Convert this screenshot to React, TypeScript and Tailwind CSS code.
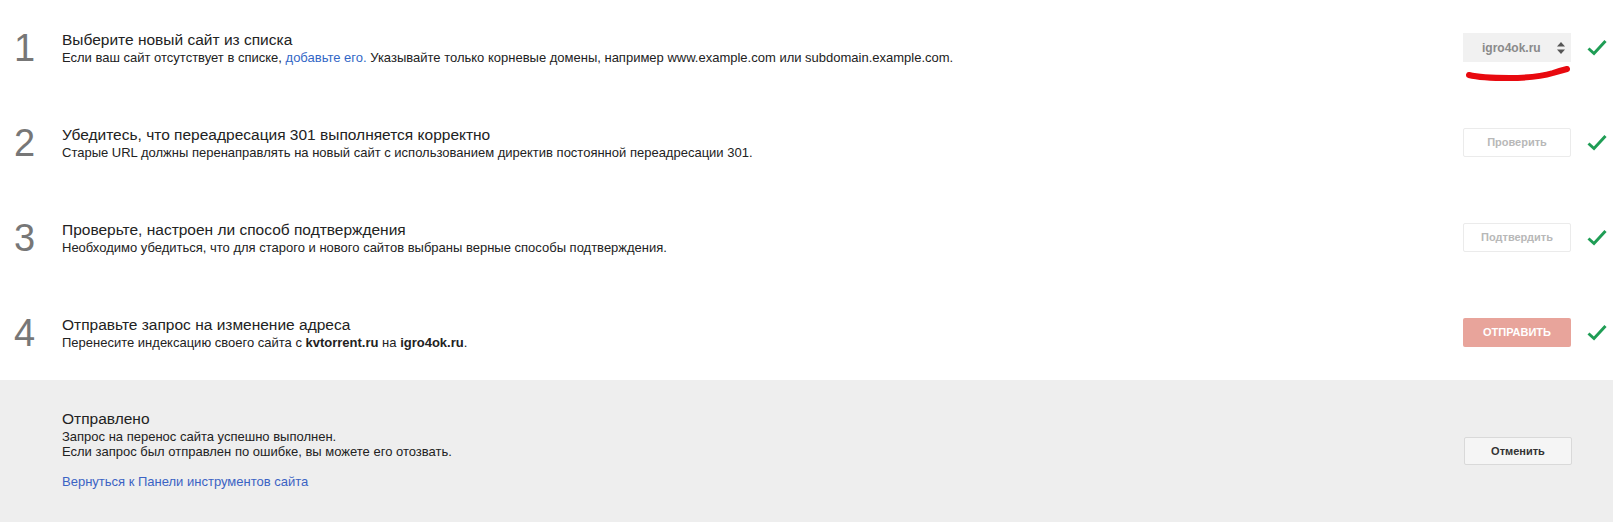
import React from "react";

type Step = {
  num: string;
  title: string;
  desc: React.ReactNode;
  action: React.ReactNode;
};

function Check() {
  return (
    <svg width="20" height="17" viewBox="0 0 20 17" className="shrink-0">
      <path d="M1.5 9.5 L7 14.5 L18.5 2" fill="none" stroke="#1f9d55" strokeWidth="3" />
    </svg>
  );
}

function SiteSelect() {
  return (
    <div className="relative">
      <div className="w-[108px] h-[29px] bg-[#f1f1f1] flex items-center pl-[19px] pr-[6px] text-[12px] font-bold text-[#8a8a8a]">
        <span className="flex-1">igro4ok.ru</span>
        <svg width="8" height="12" viewBox="0 0 8 12">
          <path d="M4 0 L8 4.5 L0 4.5 Z" fill="#555" />
          <path d="M4 12 L8 7.5 L0 7.5 Z" fill="#555" />
        </svg>
      </div>
      {/* red marker underline */}
      <svg
        width="110"
        height="20"
        viewBox="0 0 110 20"
        className="absolute left-0 top-[31px] pointer-events-none"
      >
        <path
          d="M6 11 C 14 13, 30 14, 46 14 C 62 14, 80 12, 90 9 C 96 7, 100 6, 104 5"
          fill="none"
          stroke="#e8090f"
          strokeWidth="6"
          strokeLinecap="round"
        />
      </svg>
    </div>
  );
}

function GhostButton({ label }: { label: string }) {
  return (
    <button className="w-[108px] h-[29px] bg-white border border-[#ebebeb] rounded-[2px] text-[11px] font-bold text-[#b8b8b8]">
      {label}
    </button>
  );
}

const steps: Step[] = [
  {
    num: "1",
    title: "Выберите новый сайт из списка",
    desc: (
      <>
        Если ваш сайт отсутствует в списке,{" "}
        <a className="text-[#3367c6]">добавьте его.</a> Указывайте только корневые домены, например
        www.example.com или subdomain.example.com.
      </>
    ),
    action: <SiteSelect />,
  },
  {
    num: "2",
    title: "Убедитесь, что переадресация 301 выполняется корректно",
    desc: "Старые URL должны перенаправлять на новый сайт с использованием директив постоянной переадресации 301.",
    action: <GhostButton label="Проверить" />,
  },
  {
    num: "3",
    title: "Проверьте, настроен ли способ подтверждения",
    desc: "Необходимо убедиться, что для старого и нового сайтов выбраны верные способы подтверждения.",
    action: <GhostButton label="Подтвердить" />,
  },
  {
    num: "4",
    title: "Отправьте запрос на изменение адреса",
    desc: (
      <>
        Перенесите индексацию своего сайта с <b>kvtorrent.ru</b> на <b>igro4ok.ru</b>.
      </>
    ),
    action: (
      <button className="w-[108px] h-[29px] bg-[#e8a49b] rounded-[2px] text-[11px] font-bold text-white uppercase">
        Отправить
      </button>
    ),
  },
];

export default function App() {
  return (
    <div className="w-full min-h-screen bg-white text-[#222]" style={{ fontFamily: '"Liberation Sans", Arial, sans-serif' }}>
      {steps.map((s) => (
        <div key={s.num} className="h-[95px] flex items-center pl-[14px] pr-[6px]">
          <div className="w-[48px] text-[38px] leading-none text-[#777]">{s.num}</div>
          <div className="flex-1 flex flex-col">
            <p className="text-[15.5px] leading-[20px]">{s.title}</p>
            <p className="text-[13px] leading-[16px]">{s.desc}</p>
          </div>
          {s.action}
          <div className="ml-[16px]">
            <Check />
          </div>
        </div>
      ))}

      <div className="h-[142px] bg-[#eeeeee] flex items-center pl-[62px] pr-[41px]">
        <div className="flex-1 flex flex-col pb-[4px]">
          <p className="text-[15.5px] leading-[20px]">Отправлено</p>
          <p className="text-[13px] leading-[15px]">Запрос на перенос сайта успешно выполнен.</p>
          <p className="text-[13px] leading-[15px]">Если запрос был отправлен по ошибке, вы можете его отозвать.</p>
          <a className="text-[13px] leading-[15px] mt-[15px] text-[#3b63c4]">Вернуться к Панели инструментов сайта</a>
        </div>
        <button className="w-[108px] h-[28px] bg-[#f5f5f5] border border-[#d9d9d9] rounded-[2px] text-[11px] font-bold text-[#333]">
          Отменить
        </button>
      </div>
    </div>
  );
}
